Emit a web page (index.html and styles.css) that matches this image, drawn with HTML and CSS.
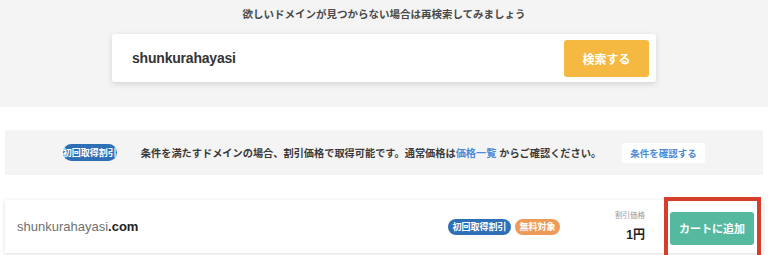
FILE: index.html
```html
<!DOCTYPE html>
<html lang="ja">
<head>
<meta charset="utf-8">
<link rel="stylesheet" href="styles.css">
</head>
<body>
  <section class="search-section">
    <p class="search-lead">欲しいドメインが見つからない場合は再検索してみましょう</p>
    <div class="search-card">
      <span class="search-input">shunkurahayasi</span>
      <button class="search-btn">検索する</button>
    </div>
  </section>

  <div class="notice">
    <span class="badge badge-blue">初回取得割引</span>
    <p class="notice-text">条件を満たすドメインの場合、割引価格で取得可能です。通常価格は<a class="link">価格一覧</a> からご確認ください。</p>
    <button class="notice-btn">条件を確認する</button>
  </div>

  <div class="domain-row">
    <div class="domain-name">shunkurahayasi<b>.com</b></div>
    <div class="domain-badges">
      <span class="badge badge-blue small">初回取得割引</span>
      <span class="badge badge-orange small">無料対象</span>
    </div>
    <div class="price">
      <span class="price-label">割引価格</span>
      <span class="price-value">1円</span>
    </div>
    <div class="cart-wrap">
      <button class="cart-btn">カートに追加</button>
    </div>
  </div>
</body>
</html>
```

FILE: styles.css
```css
* { box-sizing: border-box; }
html, body { margin: 0; padding: 0; }
body {
  width: 768px;
  height: 255px;
  overflow: hidden;
  background: #ffffff;
  font-family: "Liberation Sans", "Noto Sans CJK JP", sans-serif;
  color: #333;
}
button { font-family: inherit; border: 0; cursor: pointer; padding: 0; }

.search-section {
  background: #f4f4f4;
  height: 107px;
  padding-top: 6px;
}
.search-lead {
  margin: 0;
  text-align: center;
  font-size: 10.5px;
  line-height: 16px;
  font-weight: 700;
  color: #4a4a4a;
}
.search-card {
  width: 544px;
  height: 48px;
  margin: 12px auto 0;
  background: #fff;
  border-radius: 3px;
  box-shadow: 0 2px 6px rgba(0,0,0,0.13);
  display: flex;
  align-items: center;
  justify-content: space-between;
  padding: 0 7px 0 20px;
}
.search-input {
  font-size: 14px;
  font-weight: 700;
  color: #333;
  letter-spacing: -0.2px;
}
.search-btn {
  width: 85px;
  height: 37px;
  background: #f5b942;
  color: #fff;
  font-size: 12px;
  font-weight: 700;
  border-radius: 3px;
}

.notice {
  margin: 23px 5px 0;
  height: 45px;
  background: #f4f4f4;
  display: flex;
  align-items: center;
  justify-content: center;
}
.badge {
  display: inline-flex;
  align-items: center;
  justify-content: center;
  color: #fff;
  font-weight: 700;
  border-radius: 9px;
  font-size: 8.5px;
  height: 17px;
  padding: 0;
  white-space: nowrap;
}
.badge-blue { background: #2f6fb6; }
.badge-orange { background: #ec9b58; }
.notice .badge { width: 54px; font-size: 9px; }
.notice-text {
  margin: 0 0 0 24px;
  font-size: 10.2px;
  font-weight: 700;
  color: #3a3a3a;
  white-space: nowrap;
}
.link { color: #4b8ad8; }
.notice-btn {
  margin-left: 21px;
  width: 83px;
  height: 20px;
  background: #fff;
  color: #4b8ad8;
  font-size: 9.5px;
  font-weight: 700;
  border-radius: 2px;
}

.domain-row {
  margin: 25px 5px 0;
  height: 53px;
  background: #fff;
  box-shadow: 0 1px 4px rgba(0,0,0,0.14);
  display: flex;
  align-items: center;
  padding: 0 9px 0 12px;
}
.domain-name {
  font-size: 13px;
  color: #707070;
  flex: 1;
}
.domain-name b { color: #222; }
.domain-badges {
  display: flex;
  gap: 4px;
}
.badge.small { height: 16px; font-size: 9px; }
.badge-blue.small { width: 63px; }
.badge-orange.small { width: 45px; }
.price {
  margin-left: 55px;
  display: flex;
  flex-direction: column;
  align-items: flex-end;
  width: 30px;
}
.price-label {
  font-size: 7.5px;
  color: #999;
  line-height: 10px;
}
.price-value {
  font-size: 12px;
  font-weight: 700;
  color: #222;
  margin-top: 4px;
}
.cart-wrap {
  position: relative;
  margin-left: 25px;
  margin-top: 3px;
}
.cart-wrap::after {
  content: "";
  position: absolute;
  left: -6px;
  right: -7px;
  top: -15px;
  bottom: -14px;
  border: 4px solid #d63d2b;
  pointer-events: none;
}
.cart-btn {
  width: 84px;
  height: 33px;
  background: #55b9a0;
  color: #fff;
  font-size: 11px;
  font-weight: 700;
  border-radius: 3px;
  display: block;
}
```
